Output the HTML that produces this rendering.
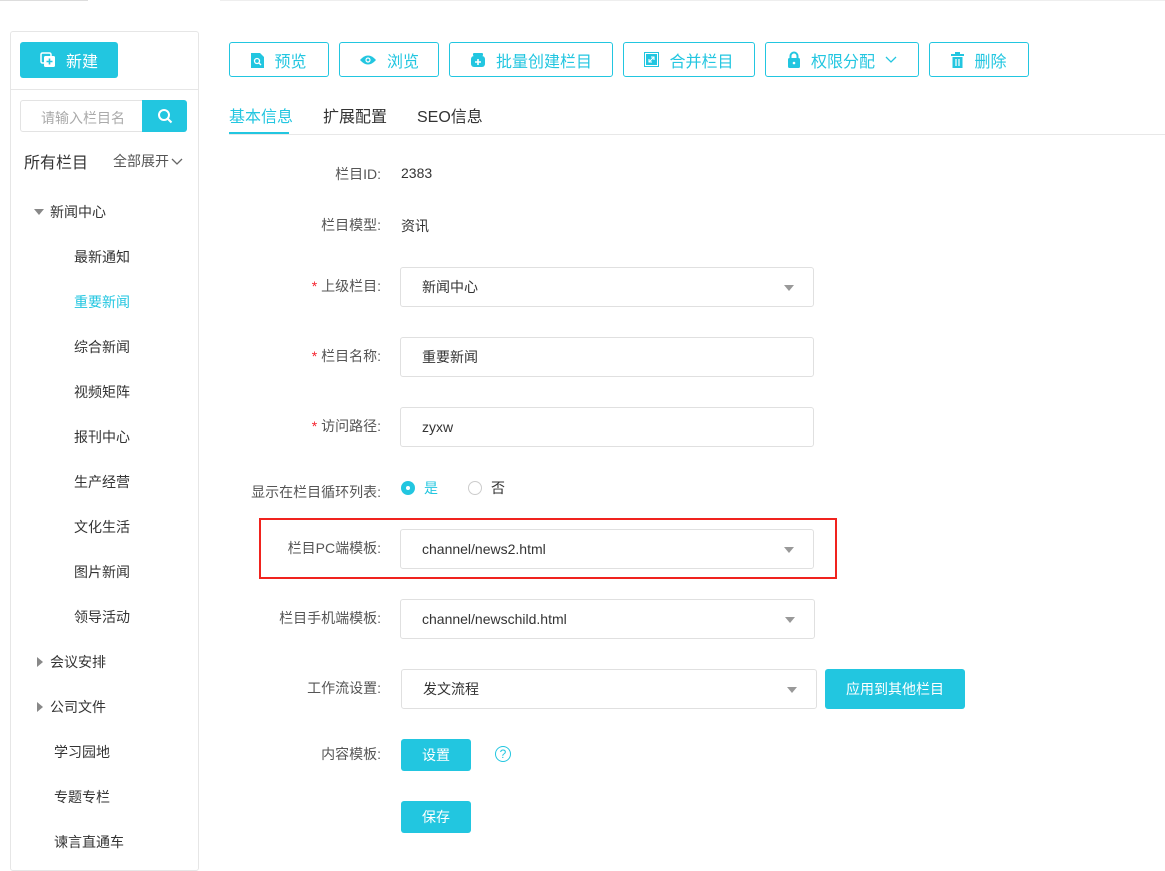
<!DOCTYPE html>
<html><head><meta charset="utf-8"><style>
*{box-sizing:border-box;margin:0;padding:0}
body{width:1165px;height:845px;overflow:hidden;background:#fff;font-family:"Liberation Sans","Noto Sans CJK SC",sans-serif;font-size:14px;color:#333;position:relative}
.a{position:absolute}
.btn{position:absolute;top:42px;height:35px;border:1px solid #22c6e0;border-radius:3px;color:#22c6e0;font-size:16px;display:flex;align-items:center;justify-content:center;gap:10px;background:#fff}
.fill{background:#22c6e0;color:#fff;border-radius:3px;display:flex;align-items:center;justify-content:center}
.lbl{position:absolute;width:200px;left:181px;text-align:right;color:#555;font-size:14px}
.inp{position:absolute;height:40px;border:1px solid #e0e0e0;border-radius:3px;padding-left:21px;display:flex;align-items:center;font-size:14px;color:#333}
.arr{position:absolute;right:19px;top:17px;width:0;height:0;border-left:5px solid transparent;border-right:5px solid transparent;border-top:6px solid #999}
.t{position:absolute;font-size:14px;color:#333}
.req::before{content:"* ";color:#f5222d}
</style></head><body>
<div class="a" style="left:0;top:0;width:88px;height:1px;background:#ddd"></div>
<div class="a" style="left:220px;top:0;width:945px;height:1px;background:#eee"></div>

<div class="a" style="left:10px;top:31px;width:189px;height:840px;border:1px solid #e6e6e6;border-radius:3px"></div>
<div class="a" style="left:10px;top:89px;width:189px;height:1px;background:#e6e6e6"></div>
<div class="a fill" style="left:20px;top:42px;width:98px;height:36px;font-size:16px;gap:10px">
<svg width="16" height="16" viewBox="0 0 16 16"><rect x="1" y="1" width="10" height="10" rx="1.5" fill="none" stroke="#fff" stroke-width="1.5"/><rect x="4" y="4" width="11" height="11" rx="1.5" fill="#fff"/><path d="M9.5 6.5v6M6.5 9.5h6" stroke="#22c6e0" stroke-width="1.6"/></svg>新建</div>
<div class="a" style="left:20px;top:100px;width:124px;height:32px;border:1px solid #e3e3e3;border-radius:3px 0 0 3px;color:#aaa;font-size:14px;padding:7px 0 0 20px">请输入栏目名</div>
<div class="a fill" style="left:142px;top:100px;width:45px;height:32px;border-radius:0 3px 3px 0"><svg width="16" height="16" viewBox="0 0 16 16"><circle cx="7" cy="7" r="5" fill="none" stroke="#fff" stroke-width="2"/><path d="M10.5 10.5l4 4" stroke="#fff" stroke-width="2"/></svg></div>
<div class="t" style="left:24px;top:149px;font-size:16px">所有栏目</div>
<div class="t" style="left:113px;top:151px;color:#555">全部展开<svg width="12" height="8" viewBox="0 0 12 8" style="margin-left:2px"><path d="M1 1l5 5 5-5" fill="none" stroke="#666" stroke-width="1.3"/></svg></div>
<div class="a" style="left:34px;top:209px;border-left:5px solid transparent;border-right:5px solid transparent;border-top:6px solid #888"></div>
<div class="t" style="left:50px;top:202px">新闻中心</div>
<div class="t" style="left:74px;top:247px">最新通知</div>
<div class="t" style="left:74px;top:292px;color:#22c6e0">重要新闻</div>
<div class="t" style="left:74px;top:337px">综合新闻</div>
<div class="t" style="left:74px;top:382px">视频矩阵</div>
<div class="t" style="left:74px;top:427px">报刊中心</div>
<div class="t" style="left:74px;top:472px">生产经营</div>
<div class="t" style="left:74px;top:517px">文化生活</div>
<div class="t" style="left:74px;top:562px">图片新闻</div>
<div class="t" style="left:74px;top:607px">领导活动</div>
<div class="a" style="left:37px;top:657px;border-top:5px solid transparent;border-bottom:5px solid transparent;border-left:6px solid #888"></div>
<div class="t" style="left:50px;top:652px">会议安排</div>
<div class="a" style="left:37px;top:702px;border-top:5px solid transparent;border-bottom:5px solid transparent;border-left:6px solid #888"></div>
<div class="t" style="left:50px;top:697px">公司文件</div>
<div class="t" style="left:54px;top:742px">学习园地</div>
<div class="t" style="left:54px;top:787px">专题专栏</div>
<div class="t" style="left:54px;top:832px">谏言直通车</div>

<div class="btn" style="left:229px;width:100px"><svg width="13" height="16" viewBox="0 0 13 16"><path d="M0 1h9l4 4v11H0z" fill="#22c6e0"/><circle cx="6" cy="9" r="2.5" fill="none" stroke="#fff" stroke-width="1.3"/><path d="M8 11l2 2" stroke="#fff" stroke-width="1.3"/></svg>预览</div>
<div class="btn" style="left:339px;width:100px"><svg width="18" height="12" viewBox="0 0 18 12"><path d="M1 6Q9-3 17 6Q9 15 1 6z" fill="#22c6e0"/><circle cx="9" cy="6" r="2.6" fill="#fff"/><circle cx="9" cy="6" r="1.4" fill="#22c6e0"/></svg>浏览</div>
<div class="btn" style="left:449px;width:164px"><svg width="16" height="16" viewBox="0 0 16 16"><rect x="3" y="1" width="10" height="3" rx="1" fill="#22c6e0"/><rect x="1" y="4" width="14" height="11" rx="3" fill="#22c6e0"/><path d="M8 7v6M5 10h6" stroke="#fff" stroke-width="1.6"/></svg>批量创建栏目</div>
<div class="btn" style="left:623px;width:132px"><svg width="15" height="15" viewBox="0 0 15 15"><rect x="0.5" y="0.5" width="14" height="14" fill="#fff" stroke="#22c6e0"/><rect x="2" y="2" width="11" height="11" fill="#22c6e0"/><path d="M10 5L5 10M5 7v3h3M10 8V5H7" stroke="#fff" stroke-width="1.1" fill="none"/></svg>合并栏目</div>
<div class="btn" style="left:765px;width:154px"><svg width="14" height="17" viewBox="0 0 14 17"><path d="M3.5 8V5a3.5 3.5 0 017 0v3" fill="none" stroke="#22c6e0" stroke-width="2"/><rect x="1" y="7" width="12" height="10" rx="1.5" fill="#22c6e0"/><circle cx="7" cy="12" r="1.3" fill="#fff"/></svg>权限分配<svg width="12" height="8" viewBox="0 0 12 8"><path d="M1 1l5 5 5-5" fill="none" stroke="#22c6e0" stroke-width="1.3"/></svg></div>
<div class="btn" style="left:929px;width:100px"><svg width="13" height="16" viewBox="0 0 13 16"><rect x="0" y="2" width="13" height="2" fill="#22c6e0"/><rect x="4" y="0" width="5" height="2" fill="#22c6e0"/><rect x="1.5" y="5" width="10" height="11" fill="#22c6e0"/><path d="M5 7v7M8 7v7" stroke="#fff" stroke-width="1.2"/></svg>删除</div>

<div class="t" style="left:229px;top:103px;font-size:16px;color:#22c6e0">基本信息</div>
<div class="t" style="left:323px;top:103px;font-size:16px">扩展配置</div>
<div class="t" style="left:417px;top:103px;font-size:16px">SEO信息</div>
<div class="a" style="left:229px;top:134px;width:936px;height:1px;background:#e8e8e8"></div>
<div class="a" style="left:229px;top:132px;width:60px;height:2px;background:#22c6e0"></div>

<div class="lbl" style="top:164px">栏目ID:</div><div class="t" style="left:401px;top:165px">2383</div>
<div class="lbl" style="top:215px">栏目模型:</div><div class="t" style="left:401px;top:216px">资讯</div>
<div class="lbl req" style="top:276px">上级栏目:</div>
<div class="inp" style="left:400px;top:267px;width:414px">新闻中心<span class="arr"></span></div>
<div class="lbl req" style="top:346px">栏目名称:</div>
<div class="inp" style="left:400px;top:337px;width:414px">重要新闻</div>
<div class="lbl req" style="top:416px">访问路径:</div>
<div class="inp" style="left:400px;top:407px;width:414px">zyxw</div>
<div class="lbl" style="top:482px;left:181px">显示在栏目循环列表:</div>
<div class="a" style="left:401px;top:481px;width:14px;height:14px;border-radius:50%;background:#22c6e0"><div style="position:absolute;left:5px;top:5px;width:4px;height:4px;border-radius:50%;background:#fff"></div></div>
<div class="t" style="left:424px;top:478px;color:#22c6e0">是</div>
<div class="a" style="left:468px;top:481px;width:14px;height:14px;border-radius:50%;border:1px solid #ccc"></div>
<div class="t" style="left:491px;top:478px">否</div>
<div class="a" style="left:259px;top:518px;width:578px;height:61px;border:2px solid #f0231e"></div>
<div class="lbl" style="top:538px">栏目PC端模板:</div>
<div class="inp" style="left:400px;top:529px;width:414px">channel/news2.html<span class="arr"></span></div>
<div class="lbl" style="top:608px">栏目手机端模板:</div>
<div class="inp" style="left:400px;top:599px;width:415px">channel/newschild.html<span class="arr"></span></div>
<div class="lbl" style="top:678px">工作流设置:</div>
<div class="inp" style="left:401px;top:669px;width:416px">发文流程<span class="arr"></span></div>
<div class="a fill" style="left:825px;top:669px;width:140px;height:40px;font-size:14px">应用到其他栏目</div>
<div class="lbl" style="top:744px">内容模板:</div>
<div class="a fill" style="left:401px;top:739px;width:70px;height:32px;font-size:14px">设置</div>
<div class="a" style="left:495px;top:746px;width:16px;height:16px;border-radius:50%;border:1px solid #22c6e0;color:#22c6e0;font-size:12px;text-align:center;line-height:14px">?</div>
<div class="a fill" style="left:401px;top:801px;width:70px;height:32px;font-size:14px">保存</div>
</body></html>
